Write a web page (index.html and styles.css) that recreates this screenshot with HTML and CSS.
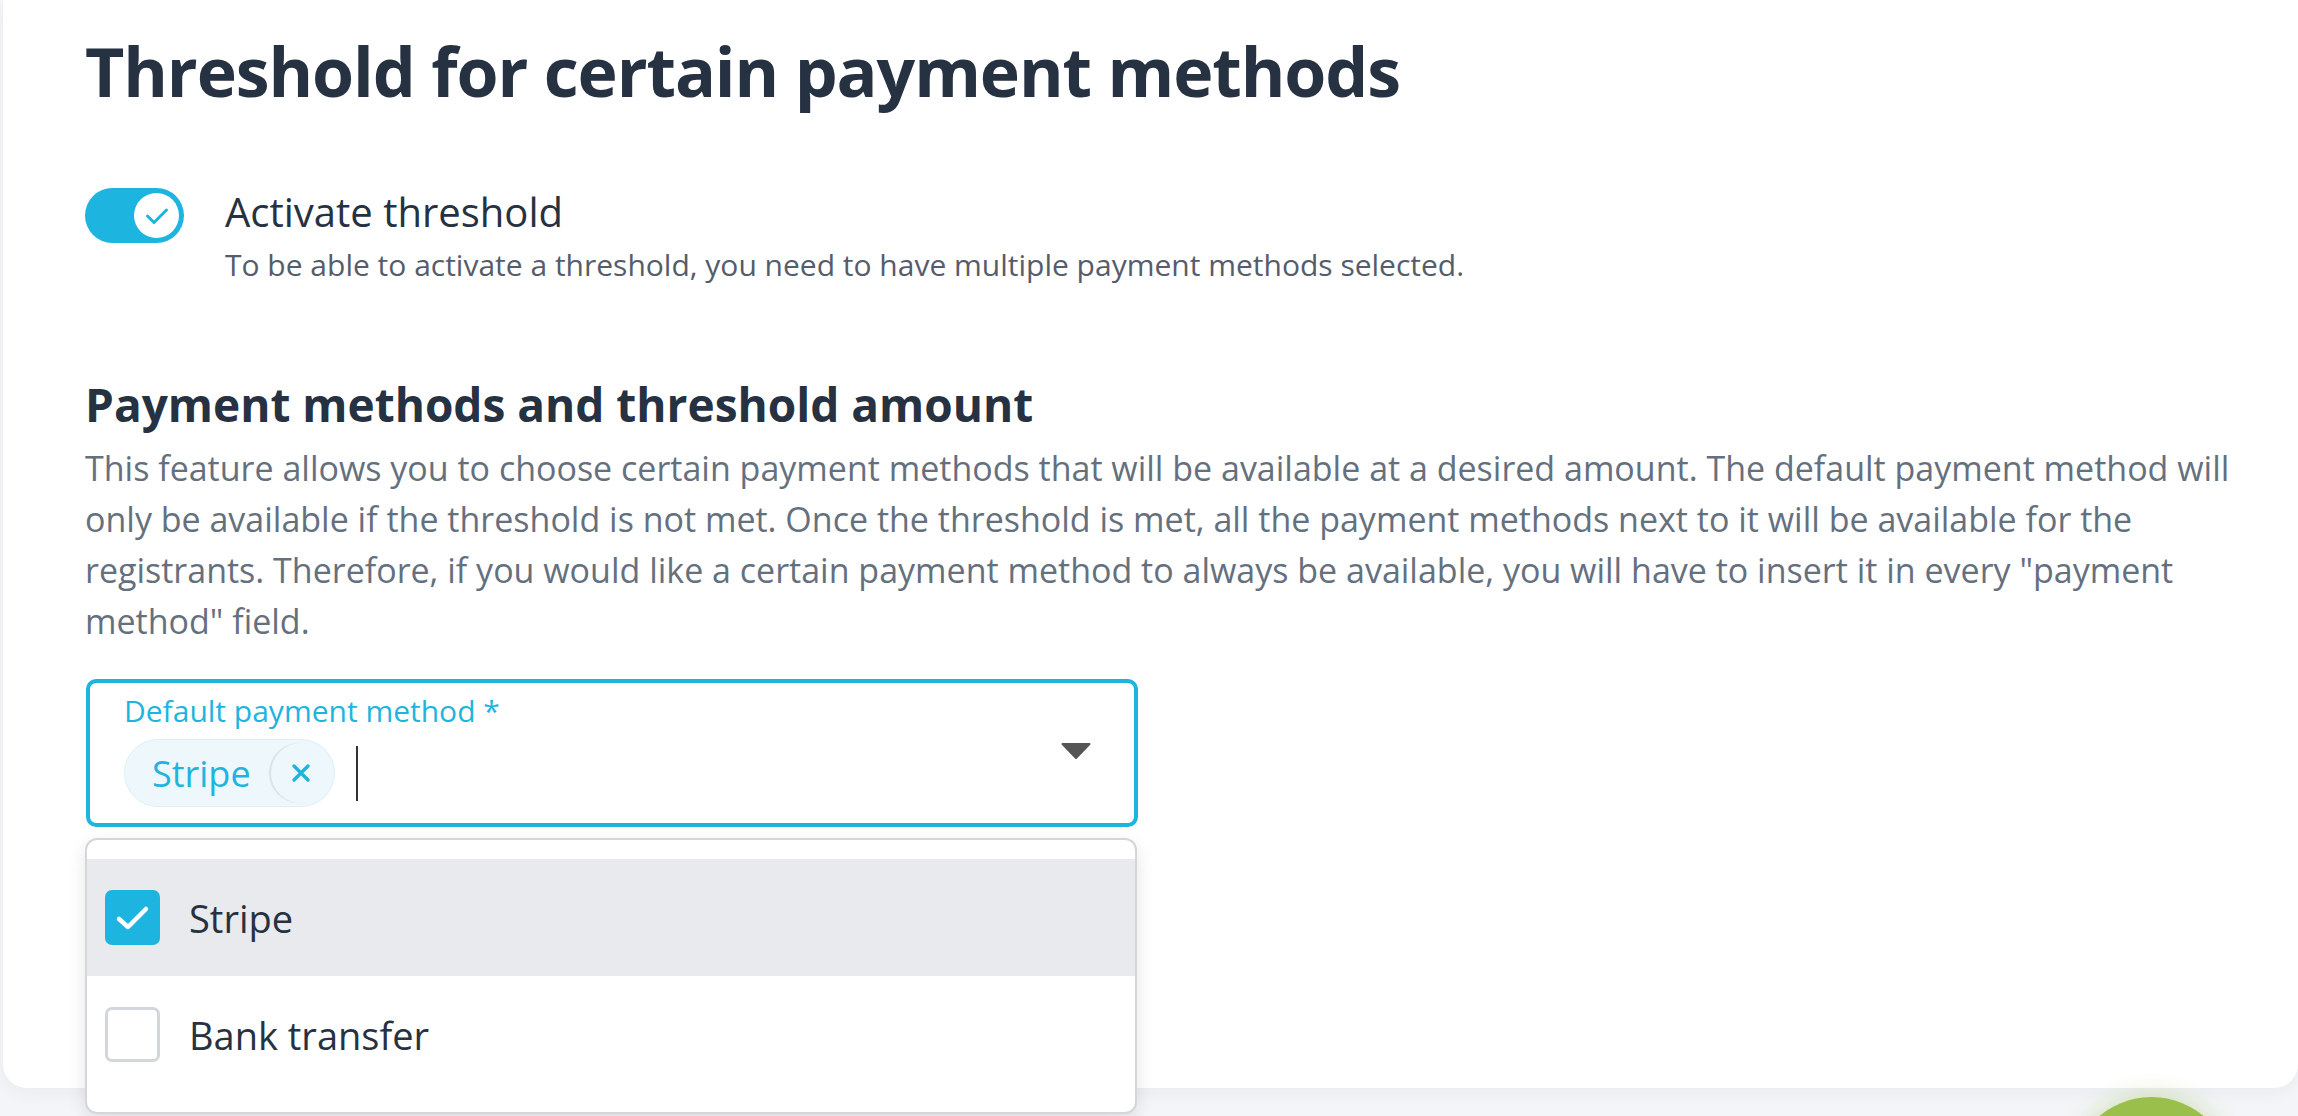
FILE: index.html
```html
<!DOCTYPE html>
<html lang="en">
<head>
    <meta charset="UTF-8">
    <meta name="viewport" content="width=device-width, initial-scale=1.0">
    <title>Threshold for certain payment methods</title>
    <link rel="stylesheet" href="styles.css">
</head>
<body>
    <main class="card">
        <h1 class="page-title">Threshold for certain payment methods</h1>

        <div class="toggle-row">
            <span class="toggle is-on">
                <span class="toggle-knob">
                    <svg viewBox="0 0 45 45" width="45" height="45">
                        <polyline points="13.5,23 20,29.5 32.5,17" fill="none" stroke="#1db5e0" stroke-width="3" stroke-linecap="round" stroke-linejoin="round"/>
                    </svg>
                </span>
            </span>
            <div class="toggle-text">
                <div class="toggle-label">Activate threshold</div>
                <div class="toggle-hint">To be able to activate a threshold, you need to have multiple payment methods selected.</div>
            </div>
        </div>

        <section class="methods">
            <h2>Payment methods and threshold amount</h2>
            <p>This feature allows you to choose certain payment methods that will be available at a desired amount. The default payment method will only be available if the threshold is not met. Once the threshold is met, all the payment methods next to it will be available for the registrants. Therefore, if you would like a certain payment method to always be available, you will have to insert it in every "payment method" field.</p>

            <div class="select-wrap">
                <div class="select is-focused">
                    <div class="select-main">
                        <label class="select-label">Default payment method *</label>
                        <div class="select-values">
                            <span class="chip">
                                Stripe
                                <span class="chip-remove">
                                    <svg viewBox="0 0 20 20" width="20" height="20">
                                        <path d="M3 3 L17 17 M17 3 L3 17" stroke="#1db5e0" stroke-width="3.4" stroke-linecap="round"/>
                                    </svg>
                                </span>
                            </span>
                            <span class="caret"></span>
                        </div>
                    </div>
                    <span class="select-arrow">
                        <svg viewBox="0 0 32 18" width="32" height="18">
                            <path d="M2.5 2 H29.5 L16 16 Z" fill="#555" stroke="#555" stroke-width="2" stroke-linejoin="round"/>
                        </svg>
                    </span>
                </div>

                <ul class="menu">
                    <li class="menu-item is-active">
                        <span class="checkbox is-checked">
                            <svg viewBox="0 0 55 55" width="55" height="55">
                                <polyline points="14,29 23,37 41,19" fill="none" stroke="#fff" stroke-width="4.5" stroke-linecap="round" stroke-linejoin="round"/>
                            </svg>
                        </span>
                        Stripe
                    </li>
                    <li class="menu-item">
                        <span class="checkbox"></span>
                        Bank transfer
                    </li>
                </ul>
            </div>
        </section>
    </main>

    <div class="chat-bubble"></div>
</body>
</html>
```

FILE: styles.css
```css
/* Base */
body {
    font-family: 'Open Sans', 'Liberation Sans', sans-serif;
    margin: 0;
    padding: 0;
    min-height: 100vh;
    background: #f3f5f8;
    color: #263142;
    overflow: hidden;
}

.card {
    margin-left: 3px;
    padding: 29px 10px 261px 82px;
    background: #fff;
    border-radius: 0 0 24px 24px;
    box-shadow: 0 4px 18px rgba(30, 40, 60, 0.05);
}

.page-title {
    margin: 0;
    font-size: 68px;
    line-height: 84px;
    font-weight: 700;
    letter-spacing: -1.1px;
    color: #263142;
}

/* Toggle */
.toggle-row {
    display: flex;
    align-items: flex-start;
    gap: 41px;
    margin-top: 71px;
}

.toggle {
    flex: none;
    display: flex;
    justify-content: flex-end;
    align-items: center;
    width: 99px;
    height: 55px;
    margin-top: 4px;
    padding: 0 5px;
    box-sizing: border-box;
    border-radius: 28px;
    background: #1db5e0;
}

.toggle-knob {
    display: block;
    width: 45px;
    height: 45px;
    border-radius: 50%;
    background: #fff;
}

.toggle-knob svg {
    display: block;
}

.toggle-label {
    font-size: 40px;
    line-height: 56px;
    color: #263142;
}

.toggle-hint {
    margin-top: 5px;
    font-size: 30px;
    line-height: 39px;
    color: #555c6b;
}

/* Payment methods */
.methods {
    margin-top: 92px;
}

.methods h2 {
    margin: 0;
    font-size: 46px;
    line-height: 57px;
    font-weight: 700;
    color: #263142;
}

.methods p {
    margin: 10px 0 0;
    font-size: 34px;
    line-height: 51px;
    color: #65707e;
}

.select-wrap {
    position: relative;
    width: 1052px;
    margin-top: 32px;
    margin-left: 1px;
}

.select {
    display: flex;
    align-items: center;
    padding: 11px 42px 16px 34px;
    border: 4px solid #1db5e0;
    border-radius: 10px;
    background: #fff;
}

.select-main {
    flex: 1;
}

.select-label {
    display: block;
    font-size: 30px;
    line-height: 34px;
    color: #1db5e0;
}

.select-values {
    display: flex;
    align-items: center;
    margin-top: 11px;
}

.chip {
    display: inline-flex;
    align-items: center;
    height: 68px;
    box-sizing: border-box;
    padding: 0 3px 0 27px;
    gap: 20px;
    border: 1px solid #dcf0f8;
    border-radius: 34px;
    background: #eef8fc;
    font-size: 36px;
    color: #1db5e0;
}

.chip-remove {
    display: flex;
    align-items: center;
    justify-content: center;
    width: 60px;
    height: 60px;
    border-radius: 50%;
    box-shadow: -2px 0 1px rgba(0, 0, 0, 0.09);
}

.chip-remove svg {
    display: block;
}

.caret {
    width: 2px;
    height: 55px;
    margin-left: 21px;
    background: #333;
}

.select-arrow svg {
    display: block;
}

/* Dropdown menu */
.menu {
    position: absolute;
    top: calc(100% + 11px);
    left: -1px;
    right: 1px;
    margin: 0;
    padding: 19px 0;
    list-style: none;
    background: #fff;
    border: 2px solid #d6d6d8;
    border-radius: 12px;
    box-shadow: 0 6px 18px rgba(0, 0, 0, 0.10);
}

.menu-item {
    display: flex;
    align-items: center;
    gap: 29px;
    height: 117px;
    padding-left: 18px;
    font-size: 38px;
    color: #263142;
}

.menu-item.is-active {
    background: #e9eaee;
}

.checkbox {
    flex: none;
    width: 55px;
    height: 55px;
    box-sizing: border-box;
    border: 3px solid #d3d7dc;
    border-radius: 7px;
    background: #fff;
}

.checkbox.is-checked {
    border: none;
    background: #1db5e0;
}

.checkbox svg {
    display: block;
}

/* Chat button */
.chat-bubble {
    position: fixed;
    right: 66px;
    bottom: -142px;
    width: 161px;
    height: 161px;
    border-radius: 50%;
    background: #9bbf4b;
    box-shadow: 0 0 24px rgba(155, 191, 75, 0.45);
}
```
